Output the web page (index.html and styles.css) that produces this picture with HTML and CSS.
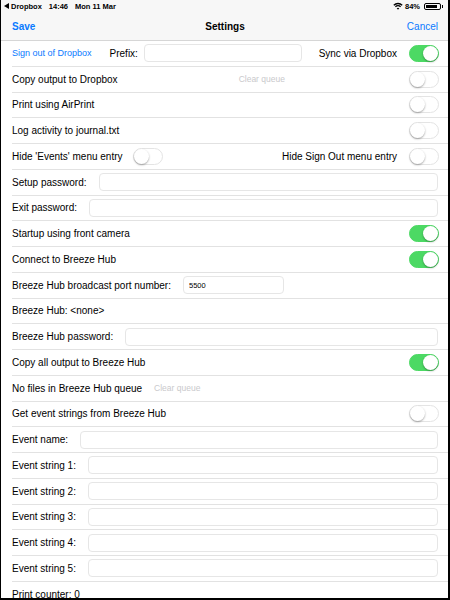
FILE: index.html
```html
<!DOCTYPE html>
<html lang="en">
<head>
  <meta charset="UTF-8">
  <meta name="viewport" content="width=device-width, initial-scale=1.0">
  <title>Settings</title>
  <link rel="stylesheet" href="styles.css">
</head>
<body>
  <div class="screen">
    <div class="status-bar">
      <div class="status-left">
        <svg class="back-arrow" width="5" height="6" viewBox="0 0 5 6"><path d="M0 3 L5 0 L5 6 Z" fill="#000"/></svg>
        <span>Dropbox</span>
        <span class="status-time">14:46</span>
        <span>Mon 11 Mar</span>
      </div>
      <div class="status-right">
        <svg width="10" height="8" viewBox="0 0 10 8">
          <path d="M0.8 3.2 A6 6 0 0 1 9.2 3.2" stroke="#000" stroke-width="1.3" fill="none"/>
          <path d="M2.4 4.8 A3.7 3.7 0 0 1 7.6 4.8" stroke="#000" stroke-width="1.3" fill="none"/>
          <path d="M5 7.8 L3.7 6.3 A1.9 1.9 0 0 1 6.3 6.3 Z" fill="#000"/>
        </svg>
        <span>84%</span>
        <span class="battery"><span class="battery-level"></span></span>
      </div>
    </div>

    <div class="nav-bar">
      <span class="nav-btn save">Save</span>
      <span class="nav-title">Settings</span>
      <span class="nav-btn cancel">Cancel</span>
    </div>

    <div class="settings">
      <div class="setting-row">
        <span class="link">Sign out of Dropbox</span>
        <span class="prefix-label">Prefix:</span>
        <input type="text" class="field prefix-field">
        <span class="push">Sync via Dropbox</span>
        <span class="toggle on"></span>
      </div>
      <div class="setting-row">
        <span>Copy output to Dropbox</span>
        <span class="clear-queue wide">Clear queue</span>
        <span class="toggle push"></span>
      </div>
      <div class="setting-row">
        <span>Print using AirPrint</span>
        <span class="toggle push"></span>
      </div>
      <div class="setting-row">
        <span>Log activity to journal.txt</span>
        <span class="toggle push"></span>
      </div>
      <div class="setting-row">
        <span>Hide 'Events' menu entry</span>
        <span class="toggle small-gap"></span>
        <span class="push">Hide Sign Out menu entry</span>
        <span class="toggle"></span>
      </div>
      <div class="setting-row">
        <span>Setup password:</span>
        <input type="text" class="field">
      </div>
      <div class="setting-row">
        <span>Exit password:</span>
        <input type="text" class="field">
      </div>
      <div class="setting-row">
        <span>Startup using front camera</span>
        <span class="toggle on push"></span>
      </div>
      <div class="setting-row">
        <span>Connect to Breeze Hub</span>
        <span class="toggle on push"></span>
      </div>
      <div class="setting-row">
        <span>Breeze Hub broadcast port number:</span>
        <input type="text" class="field port-field" value="5500">
      </div>
      <div class="setting-row">
        <span>Breeze Hub: &lt;none&gt;</span>
      </div>
      <div class="setting-row">
        <span>Breeze Hub password:</span>
        <input type="text" class="field">
      </div>
      <div class="setting-row">
        <span>Copy all output to Breeze Hub</span>
        <span class="toggle on push"></span>
      </div>
      <div class="setting-row">
        <span>No files in Breeze Hub queue</span>
        <span class="clear-queue">Clear queue</span>
      </div>
      <div class="setting-row">
        <span>Get event strings from Breeze Hub</span>
        <span class="toggle push"></span>
      </div>
      <div class="setting-row">
        <span>Event name:</span>
        <input type="text" class="field">
      </div>
      <div class="setting-row">
        <span>Event string 1:</span>
        <input type="text" class="field">
      </div>
      <div class="setting-row">
        <span>Event string 2:</span>
        <input type="text" class="field">
      </div>
      <div class="setting-row">
        <span>Event string 3:</span>
        <input type="text" class="field">
      </div>
      <div class="setting-row">
        <span>Event string 4:</span>
        <input type="text" class="field">
      </div>
      <div class="setting-row">
        <span>Event string 5:</span>
        <input type="text" class="field">
      </div>
      <div class="setting-row">
        <span>Print counter: 0</span>
      </div>
    </div>
  </div>
</body>
</html>
```

FILE: styles.css
```css
* {
  box-sizing: border-box;
}
body {
  margin: 0;
  font-family: "Liberation Sans", Arial, sans-serif;
  color: #000;
  background-color: #fff;
}
.screen {
  width: 450px;
  height: 600px;
  border-left: 1px solid #000;
  border-right: 2px solid #000;
  border-bottom: 2px solid #000;
  overflow: hidden;
}
.status-bar {
  height: 12px;
  display: flex;
  justify-content: space-between;
  align-items: center;
  padding: 0 7px 0 3px;
  font-size: 7.5px;
  font-weight: bold;
  background: #f7f7f7;
}
.status-left, .status-right {
  display: flex;
  align-items: center;
  gap: 2px;
}
.status-left span + span {
  margin-left: 5px;
}
.battery {
  position: relative;
  width: 17px;
  height: 7px;
  margin-left: 2px;
  border: 1px solid #000;
  border-radius: 2px;
  padding: 1px;
}
.battery::after {
  content: "";
  position: absolute;
  right: -3px;
  top: 1.5px;
  width: 1.5px;
  height: 2.5px;
  background: #000;
}
.battery-level {
  display: block;
  width: 84%;
  height: 100%;
  background: #000;
}
.nav-bar {
  height: 29px;
  display: grid;
  grid-template-columns: 1fr auto 1fr;
  align-items: center;
  padding: 0 10px 0 11px;
  border-bottom: 1px solid #d6d6d6;
  background: #f7f7f7;
  font-size: 10px;
}
.nav-btn {
  color: #0a7aff;
}
.save {
  font-weight: bold;
}
.cancel {
  justify-self: end;
}
.nav-title {
  font-weight: bold;
}
.setting-row {
  height: 25.76px;
  margin-left: 11px;
  padding-right: 9px;
  display: flex;
  align-items: center;
  gap: 12px;
  border-bottom: 1px solid #e2e2e2;
  font-size: 10px;
  white-space: nowrap;
}
.link {
  color: #0a7aff;
  font-size: 9px;
}
.prefix-label {
  margin-left: 6px;
}
.push {
  margin-left: auto;
}
.small-gap {
  margin-left: -2px;
}
.clear-queue {
  color: #c9c9cc;
  font-size: 8.5px;
}
.clear-queue.wide {
  margin-left: 109px;
}
.field {
  flex: 1;
  min-width: 0;
  height: 18px;
  margin: 0 1px 0 0;
  padding: 0 5px;
  border: 1px solid #e6e6e6;
  border-radius: 4px;
  background: #fff;
  font-family: inherit;
  font-size: 7.5px;
  color: #000;
  outline: none;
}
.prefix-field {
  flex: none;
  width: 158px;
  margin-left: -6px;
}
.port-field {
  flex: none;
  width: 101px;
}
.toggle {
  position: relative;
  flex: none;
  width: 30px;
  height: 17px;
  border-radius: 9px;
  background: #fff;
  border: 1px solid #e4e4e4;
}
.toggle::after {
  content: "";
  position: absolute;
  top: 0;
  left: 0;
  width: 15px;
  height: 15px;
  border-radius: 50%;
  background: #fff;
  box-shadow: 0 1px 2px rgba(0,0,0,0.35);
}
.toggle.on {
  background: #4cd964;
  border-color: #4cd964;
}
.toggle.on::after {
  left: 13px;
}
```
